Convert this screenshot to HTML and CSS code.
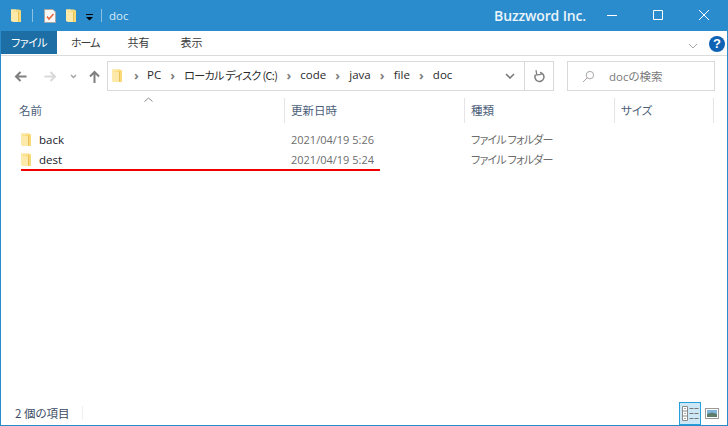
FILE: index.html
```html
<!DOCTYPE html>
<html lang="ja">
<head>
<meta charset="utf-8">
<title>doc</title>
<link rel="stylesheet" href="styles.css">
</head>
<body>
<svg class="defs" width="0" height="0" aria-hidden="true">
  <defs>
    <symbol id="folder" viewBox="0 0 10 13">
      <path d="M0 0.5 H8 L10 1.5 V13 H3 L0 12 Z" fill="#f9d978"/>
      <path d="M0 0.5 H4.5 L6 2 H1.5 V2.5 L7 3 V13 H3 L0 12 Z" fill="#fdeaaa"/>
      <path d="M7 3 L8 2.5 V12 L7 13 Z" fill="#e9bf57"/>
    </symbol>
  </defs>
</svg>
<div class="window">
  <header class="titlebar">
    <div class="qat">
      <svg class="qat-folder"><use href="#folder"/></svg>
      <span class="qat-sep"></span>
      <svg class="qat-check" viewBox="0 0 12 14">
        <path d="M.5.5H9L11.5 3V13.5H.5Z" fill="#f7f7f7" stroke="#a8a8a8"/>
        <path d="M3 7.5L5 10 9.5 5" fill="none" stroke="#e8643a" stroke-width="1.5"/>
      </svg>
      <svg class="qat-folder qat-folder2"><use href="#folder"/></svg>
      <svg class="qat-down" viewBox="0 0 7 7">
        <path d="M0 0H7V1H0Z" fill="#000"/><path d="M0 3H7L3.5 6.5Z" fill="#000"/>
      </svg>
      <span class="qat-sep qat-sep2"></span>
      <span class="title">doc</span>
    </div>
    <div class="brand">Buzzword Inc.</div>
    <div class="winbtns">
      <svg class="winbtn" viewBox="0 0 46 31"><path d="M18 15.5H28" stroke="#fff" fill="none"/></svg>
      <svg class="winbtn" viewBox="0 0 46 31"><path d="M18.5 10.5H27.5V19.5H18.5Z" stroke="#fff" fill="none"/></svg>
      <svg class="winbtn" viewBox="0 0 46 31"><path d="M18 10L28 20M28 10L18 20" stroke="#fff" fill="none"/></svg>
    </div>
  </header>

  <nav class="ribbon">
    <span class="tab tab-active">ファイル</span>
    <span class="tab tab-home">ホーム</span>
    <span class="tab tab-share">共有</span>
    <span class="tab tab-view">表示</span>
    <span class="ribbon-fill"></span>
    <svg class="ribbon-chevron" viewBox="0 0 10 6"><path d="M1 1L5 5 9 1" fill="none" stroke="#a8a8a8" stroke-width="1"/></svg>
    <span class="help">?</span>
  </nav>

  <section class="addressrow">
    <svg class="nav nav-back" viewBox="0 0 13 13"><path d="M12.5 6.5H2M6.5 2L2 6.5 6.5 11" fill="none" stroke="#7f7f7f" stroke-width="2"/></svg>
    <svg class="nav nav-fwd" viewBox="0 0 13 13"><path d="M.5 6.5H11M6.5 2L11 6.5 6.5 11" fill="none" stroke="#d9d9d9" stroke-width="2"/></svg>
    <svg class="nav-drop" viewBox="0 0 7 5"><path d="M1 1L3.5 3.5 6 1" fill="none" stroke="#a0a0a0" stroke-width="1.3"/></svg>
    <svg class="nav nav-up" viewBox="0 0 13 13"><path d="M6.5 13V2M2 6.5L6.5 2 11 6.5" fill="none" stroke="#7f7f7f" stroke-width="2"/></svg>
    <div class="addressbox">
      <svg class="addr-folder"><use href="#folder"/></svg>
      <span class="crumb-sep">›</span><span class="crumb">PC</span>
      <span class="crumb-sep">›</span><span class="crumb crumb-ja">ローカル ディスク (C:)</span>
      <span class="crumb-sep">›</span><span class="crumb">code</span>
      <span class="crumb-sep">›</span><span class="crumb">java</span>
      <span class="crumb-sep">›</span><span class="crumb">file</span>
      <span class="crumb-sep">›</span><span class="crumb">doc</span>
      <span class="addr-fill"></span>
      <svg class="addr-drop" viewBox="0 0 10 6"><path d="M1 1L5 5 9 1" fill="none" stroke="#7a7a7a" stroke-width="1.6"/></svg>
      <span class="addr-refresh">
        <svg class="refresh-icon" viewBox="0 0 12 13"><path d="M7 2.5A4.5 4.5 0 1 1 2.6 4.6" fill="none" stroke="#7f7f7f" stroke-width="1.5"/><path d="M3.5 0V5H8.5" fill="none" stroke="#7f7f7f" stroke-width="1.3" transform="rotate(-10 4 3)"/></svg>
      </span>
    </div>
    <div class="searchbox">
      <svg class="search-icon" viewBox="0 0 14 14"><circle cx="8.5" cy="5.5" r="4" fill="none" stroke="#a0a0a0"/><path d="M5.5 8.5L1 13" stroke="#b09a90" fill="none"/></svg>
      <span class="search-text">docの検索</span>
    </div>
  </section>

  <section class="filelist">
    <svg class="sort-caret" viewBox="0 0 9 5"><path d="M.5 4.5L4.5 1 8.5 4.5" fill="none" stroke="#8a8a8a"/></svg>
    <div class="row headers">
      <span class="col col-name">名前</span>
      <span class="col col-date">更新日時</span>
      <span class="col col-type">種類</span>
      <span class="col col-size">サイズ</span>
    </div>
    <div class="row item">
      <span class="col col-name"><svg class="item-folder"><use href="#folder"/></svg><span class="name">back</span></span>
      <span class="col col-date">2021/04/19 5:26</span>
      <span class="col col-type">ファイル フォルダー</span>
    </div>
    <div class="row item">
      <span class="col col-name"><svg class="item-folder"><use href="#folder"/></svg><span class="name">dest</span></span>
      <span class="col col-date">2021/04/19 5:24</span>
      <span class="col col-type">ファイル フォルダー</span>
    </div>
    <div class="redline"></div>
  </section>

  <footer class="statusbar">
    <span class="count">2 個の項目</span>
    <span class="status-sep"></span>
    <span class="status-fill"></span>
    <span class="viewbtn viewbtn-on">
      <svg class="view-icon-details" viewBox="0 0 17 15">
        <path d="M.5.5H5.5V14.5H.5Z M.5 5H5.5 M.5 10H5.5" fill="#fff" stroke="#8a8a8a"/>
        <path d="M2.5 2H3.5V3H2.5Z M2.5 7H3.5V8H2.5Z M2.5 12H3.5V13H2.5Z" fill="#555"/>
        <path d="M7.5 2.5H11.5M12.5 2.5H16.5M7.5 7.5H11.5M12.5 7.5H16.5M7.5 12.5H11.5M12.5 12.5H16.5" stroke="#777" fill="none"/>
      </svg>
    </span>
    <span class="viewbtn">
      <svg class="view-icon-large" viewBox="0 0 14 11">
        <rect x=".5" y=".5" width="13" height="10" fill="#fff" stroke="#9a9a9a"/>
        <rect x="2" y="2" width="10" height="4" fill="#7fb4dc"/>
        <path d="M2 6L7 4.5 12 6V9H2Z" fill="#5d7d6a"/>
      </svg>
    </span>
  </footer>
</div>
</body>
</html>
```
FILE: styles.css
```css
* { box-sizing: border-box; }
html, body { margin: 0; padding: 0; }
body {
  width: 728px;
  height: 426px;
  overflow: hidden;
  background: #fff;
  font-family: "Noto Sans CJK JP", "Open Sans", sans-serif;
  font-feature-settings: "palt";
  font-size: 12px;
  color: #1e1e1e;
}
.defs { display: block; height: 0; }
.window {
  width: 728px;
  height: 426px;
  display: flex;
  flex-direction: column;
  border: 1px solid #2b8ccd;
  border-top: 0;
}

/* title bar */
.titlebar {
  height: 31px;
  flex: none;
  margin: 0 -1px;
  background: #2b8ccd;
  display: flex;
  align-items: center;
  color: #fff;
}
.qat {
  display: flex;
  align-items: center;
  padding-left: 11px;
  flex: 1;
}
.qat-folder { width: 10px; height: 13px; }
.qat-folder2 { margin-left: 10px; }
.qat-sep { width: 1px; height: 13px; background: #8cc0e3; margin-left: 11px; }
.qat-sep2 { margin-left: 8px; }
.qat-check { width: 12px; height: 14px; margin-left: 11px; }
.qat-down { width: 7px; height: 7px; margin-left: 10px; margin-top: 4px; }
.title {
  margin-left: 7px;
  font-family: "Open Sans", sans-serif;
  font-size: 11.5px;
  color: #d7eaf7;
}
.brand {
  font-family: "Open Sans", sans-serif;
  font-size: 14px;
  font-weight: 600;
  letter-spacing: -.15px;
  color: #eaf4fb;
  margin-right: 3px;
}
.winbtns { display: flex; margin-right: 1px; }
.winbtn { width: 46px; height: 31px; display: block; }

/* ribbon */
.ribbon {
  height: 25px;
  flex: none;
  display: flex;
  align-items: flex-start;
  border-bottom: 1px solid #dadbdc;
  font-size: 11px;
}
.tab {
  height: 23px;
  line-height: 22px;
  color: #3a3a3a;
}
.tab-active {
  width: 56px;
  background: #1c6ea4;
  color: #fff;
  text-align: center;
  letter-spacing: -.5px;
}
.tab-home { margin-left: 14px; letter-spacing: -1px; }
.tab-share { margin-left: 28px; }
.tab-view { margin-left: 31px; }
.ribbon-fill { flex: 1; }
.ribbon-chevron { width: 10px; height: 6px; margin: 12px 5px 0 0; }
.help {
  width: 16px;
  height: 16px;
  margin: 5px 2px 0 6px;
  border-radius: 50%;
  background: #0f62b4;
  color: #fff;
  font-family: "Liberation Sans", sans-serif;
  font-weight: 700;
  font-size: 13px;
  line-height: 16px;
  text-align: center;
}

/* address row */
.addressrow {
  height: 36px;
  flex: none;
  display: flex;
  align-items: center;
  padding: 5px 0 1px;
  color: #333;
}
.nav { width: 13px; height: 13px; flex: none; }
.nav-back { margin-left: 13px; }
.nav-fwd { margin-left: 17px; }
.nav-drop { width: 7px; height: 5px; margin-left: 13px; }
.nav-up { margin-left: 11px; }
.addressbox {
  width: 447px;
  height: 30px;
  margin-left: 6px;
  border: 1px solid #d9d9d9;
  display: flex;
  align-items: center;
  font-family: "Open Sans", "Noto Sans CJK JP", sans-serif;
  font-size: 11.5px;
  padding-left: 4px;
}
.addr-folder { width: 10px; height: 13px; margin-bottom: 2px; flex: none; }
.crumb-sep { color: #808080; width: 21px; text-align: center; font-size: 13px; font-weight: 700; line-height: 1; margin-bottom: 2px; }
.addr-folder + .crumb-sep { margin-left: 5px; width: 19px; }
.crumb { color: #2a2a2a; padding: 0 1px; white-space: nowrap; line-height: 1; margin-bottom: 2px; }
.crumb-ja { font-family: "Noto Sans CJK JP", sans-serif; font-size: 11px; letter-spacing: -.65px; }
.addr-fill { flex: 1; }
.addr-drop { width: 10px; height: 6px; margin-right: 9px; }
.addr-refresh {
  width: 29px;
  height: 28px;
  border-left: 1px solid #d9d9d9;
  display: flex;
  align-items: center;
  justify-content: center;
}
.refresh-icon { width: 12px; height: 13px; }
.searchbox {
  width: 148px;
  height: 30px;
  margin-left: 13px;
  border: 1px solid #d9d9d9;
  display: flex;
  align-items: center;
  color: #7a7a7a;
  font-size: 11.5px;
}
.search-icon { width: 13px; height: 13px; margin-left: 14px; }
.search-text { margin-left: 14px; font-family: "Open Sans", "Noto Sans CJK JP", sans-serif; }

/* file list */
.filelist { flex: 1; position: relative; padding-top: 6px; }
.sort-caret { position: absolute; left: 143px; top: 5px; width: 9px; height: 5px; display: block; }
.row { display: flex; align-items: center; }
.headers {
  height: 25px;
  color: #4c607a;
  font-size: 11.5px;
  margin-bottom: 7px;
}
.col { display: flex; align-items: center; height: 100%; white-space: nowrap; }
.col-name { width: 283px; padding-left: 18px; }
.col-date { width: 180px; }
.col-type { width: 150px; }
.headers .col { padding-bottom: 1px; }
.headers .col-date, .headers .col-type, .headers .col-size {
  border-left: 1px solid #e5e5e5;
  padding-left: 6px;
}
.headers .col-size { width: 100px; border-right: 1px solid #e5e5e5; }
.item { height: 20px; color: #6d6d6d; font-size: 11px; }
.item .col { padding-bottom: 2px; }
.item .col-name { padding-left: 20px; }
.item .col-date { padding-left: 7px; font-family: "Open Sans", sans-serif; font-size: 11px; }
.item .col-type { padding-left: 7px; letter-spacing: -.8px; }
.item-folder { width: 10px; height: 13px; flex: none; }
.name { margin-left: 8px; color: #1a1a2a; font-family: "Open Sans", sans-serif; font-size: 11.5px; }
.redline {
  position: absolute;
  left: 20px;
  top: 77px;
  width: 359px;
  height: 2px;
  background: #f00000;
}

/* status bar */
.statusbar {
  height: 24px;
  flex: none;
  display: flex;
  align-items: center;
  padding-right: 4px;
  color: #3b4a63;
  font-size: 11.5px;
}
.count { margin-left: 14px; }
.status-sep { width: 1px; height: 14px; background: #f0f0f0; margin-left: 12px; }
.status-fill { flex: 1; }
.viewbtn {
  width: 22px;
  height: 23px;
  align-self: flex-end;
  display: flex;
  align-items: center;
  justify-content: center;
}
.viewbtn-on { background: #cce8f7; border: 1px solid #26a0da; }
.view-icon-details { width: 17px; height: 15px; }
.view-icon-large { width: 14px; height: 11px; }
```
